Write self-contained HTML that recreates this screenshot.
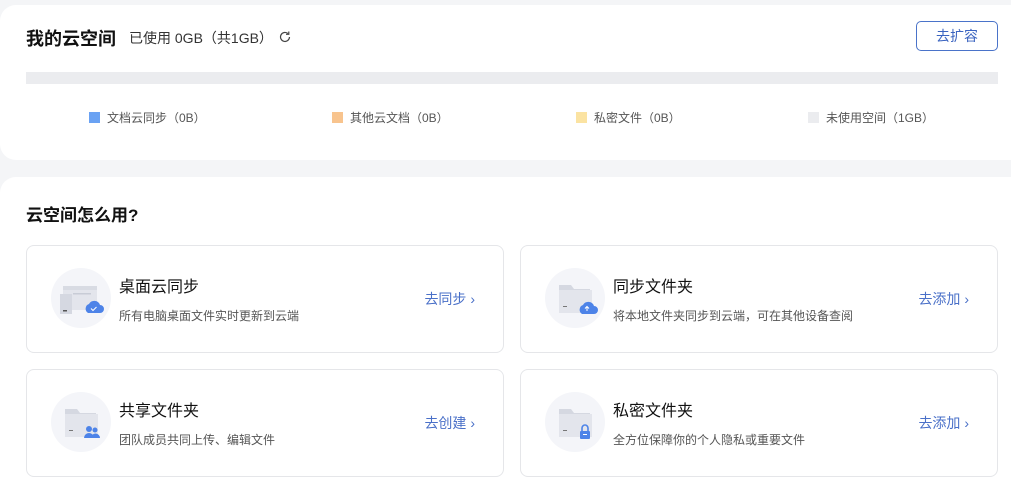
<!DOCTYPE html>
<html><head><meta charset="utf-8"><style>
*{margin:0;padding:0;box-sizing:border-box}
html,body{width:1011px;height:483px;overflow:hidden}
body{background:#f4f5f7;font-family:"Liberation Sans","Noto Sans CJK SC",sans-serif;position:relative;color:#222}
.card1{position:absolute;left:0;top:5px;width:1030px;height:155px;background:#fff;border-radius:16px}
.card2{position:absolute;left:0;top:177px;width:1030px;height:330px;background:#fff;border-radius:16px}
.abs{position:absolute;white-space:nowrap}
.t1{left:26px;top:25px;font-size:18px;font-weight:bold;color:#111}
.used{left:129px;top:28px;font-size:14px;color:#333}
.btn{left:916px;top:21px;width:82px;height:30px;border:1px solid #4a73c9;border-radius:5px;color:#3b64c0;font-size:14px;text-align:center;line-height:28px}
.bar{left:26px;top:72px;width:972px;height:12px;background:#ebecef}
.leg{top:109px;font-size:12px;color:#555}
.leg i{display:inline-block;width:11px;height:11px;vertical-align:-1px;margin-right:7px}
.t2{left:26px;top:201px;font-size:17px;font-weight:bold;color:#111}
.it{position:absolute;width:478px;height:108px;border:1px solid #e5e6e9;border-radius:8px;background:#fff}
.it .c{position:absolute;left:24px;top:22px;width:60px;height:60px;border-radius:50%;background:#f4f5f9}
.it .h{position:absolute;left:92px;top:27px;font-size:16px;color:#111}
.it .d{position:absolute;left:92px;top:61px;font-size:12px;color:#555}
.it .a{position:absolute;right:28px;top:43px;font-size:14px;color:#4a70c8}
</style></head><body>
<div class="card1"></div>
<div class="abs t1">我的云空间</div>
<div class="abs used">已使用 0GB（共1GB）</div>
<svg class="abs" style="left:278px;top:30px" width="14" height="14" viewBox="0 0 14 14"><path d="M11.5 7A4.5 4.5 0 1 1 10 3.6" fill="none" stroke="#444" stroke-width="1.2"/><path d="M10.8 1.5V4.3H8" fill="none" stroke="#444" stroke-width="1.2"/></svg>
<div class="abs btn">去扩容</div>
<div class="abs bar"></div>
<div class="abs leg" style="left:89px"><i style="background:#6aa2f3"></i>文档云同步（0B）</div>
<div class="abs leg" style="left:332px"><i style="background:#f8c48e"></i>其他云文档（0B）</div>
<div class="abs leg" style="left:576px"><i style="background:#fbe3a2"></i>私密文件（0B）</div>
<div class="abs leg" style="left:808px"><i style="background:#ebecef"></i>未使用空间（1GB）</div>
<div class="card2"></div>
<div class="abs t2">云空间怎么用?</div>

<div class="it" style="left:26px;top:245px"><div class="c"><svg width="60" height="60"><rect x="12" y="18" width="34" height="24" fill="#e3e5ec"/><rect x="12" y="18" width="34" height="4" fill="#d8dbe3"/><rect x="22" y="25" width="18" height="1.5" fill="#c8ccd6"/><rect x="9" y="26" width="12" height="20" fill="#d5d8e1"/><rect x="12" y="42" width="4" height="1.5" fill="#555"/><path d="M37 45a5 5 0 0 1 1-9 6 6 0 0 1 11 1 4 4 0 0 1 0 8z" fill="#4d83e8"/><path d="M40 40.5l2 2 3.5-3.5" stroke="#fff" fill="none" stroke-width="1"/></svg></div><div class="h">桌面云同步</div><div class="d">所有电脑桌面文件实时更新到云端</div><div class="a">去同步 ›</div></div>

<div class="it" style="left:520px;top:245px"><div class="c"><svg width="60" height="60"><path d="M14 17h12l3 4h16v23H14z" fill="#d5d8e1"/><rect x="14" y="22" width="33" height="23" fill="#e3e5ec"/><rect x="18" y="38" width="4" height="1" fill="#777"/><path d="M37 46a5 5 0 0 1 1-9 6 6 0 0 1 11 1 4 4 0 0 1 0 8z" fill="#4d83e8"/><path d="M42 43v-4M40 40.5l2-2 2 2" stroke="#fff" fill="none" stroke-width="1"/></svg></div><div class="h">同步文件夹</div><div class="d">将本地文件夹同步到云端，可在其他设备查阅</div><div class="a">去添加 ›</div></div>

<div class="it" style="left:26px;top:369px"><div class="c"><svg width="60" height="60"><path d="M14 17h12l3 4h16v23H14z" fill="#d5d8e1"/><rect x="14" y="22" width="33" height="23" fill="#e3e5ec"/><rect x="18" y="38" width="4" height="1" fill="#777"/><circle cx="38" cy="37" r="3" fill="#4d83e8"/><circle cx="44" cy="38" r="2.5" fill="#4d83e8"/><path d="M33 46a5 5 0 0 1 10 0zM40 46a4.5 4.5 0 0 1 9 0z" fill="#4d83e8"/></svg></div><div class="h">共享文件夹</div><div class="d">团队成员共同上传、编辑文件</div><div class="a">去创建 ›</div></div>

<div class="it" style="left:520px;top:369px"><div class="c"><svg width="60" height="60"><path d="M14 17h12l3 4h16v23H14z" fill="#d5d8e1"/><rect x="14" y="22" width="33" height="23" fill="#e3e5ec"/><rect x="18" y="38" width="4" height="1" fill="#777"/><path d="M37 39v-3a3 3 0 0 1 6 0v3" stroke="#4d83e8" stroke-width="1.6" fill="none"/><rect x="35" y="39" width="10" height="8" rx="1" fill="#4d83e8"/><rect x="38" y="42" width="4" height="1" fill="#fff"/></svg></div><div class="h">私密文件夹</div><div class="d">全方位保障你的个人隐私或重要文件</div><div class="a">去添加 ›</div></div>
</body></html>
